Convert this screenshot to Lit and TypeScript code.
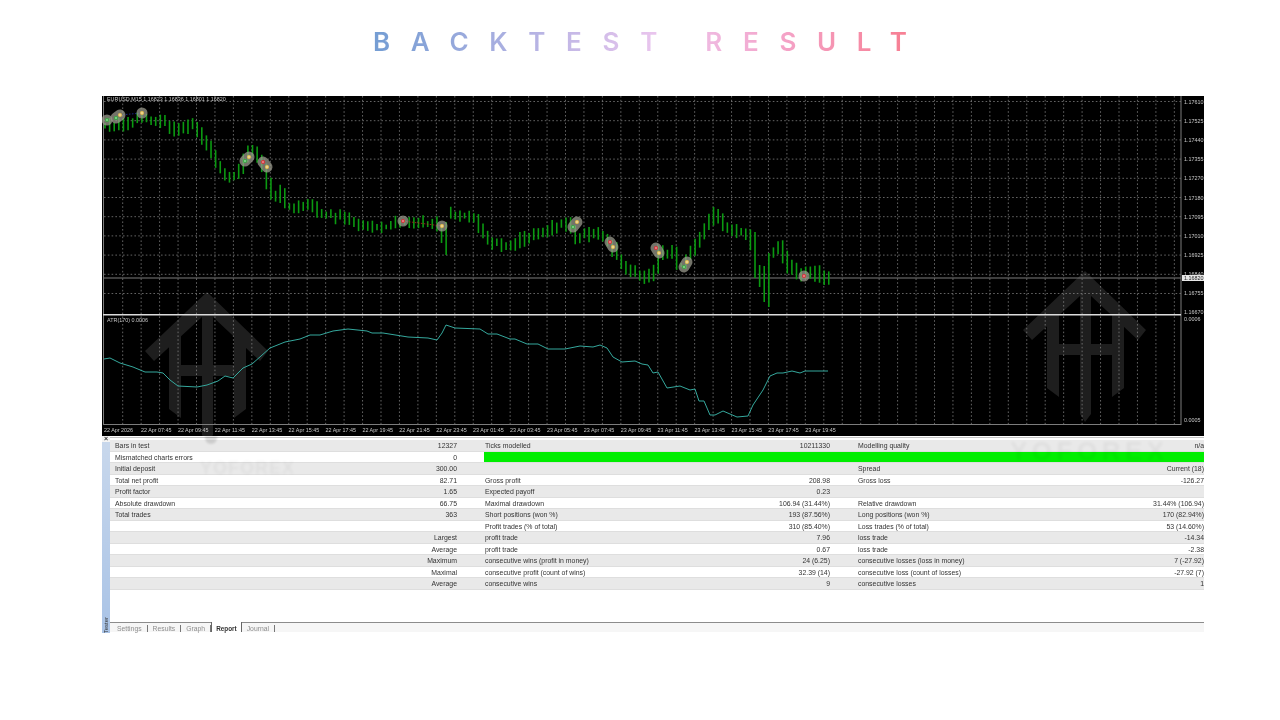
import { css, html, LitElement, svg } from 'lit'
import { customElement } from 'lit/decorators.js'

type Point = [number, number]

const PRICE: Point[] = [
  [105, 125], [120, 125], [142, 120], [150, 119], [163, 119], [178, 129], [197, 125],
  [205, 135], [215, 155], [227, 174], [240, 177], [247, 159], [255, 149], [263, 159],
  [270, 179], [273, 195], [283, 192], [290, 207], [313, 207], [327, 214], [353, 219],
  [367, 227], [393, 227], [403, 222], [440, 224], [450, 214], [477, 217], [482, 227],
  [492, 240], [510, 247], [530, 237], [547, 230], [570, 223], [580, 237], [597, 233],
  [613, 243], [627, 267], [647, 278], [657, 273], [663, 253], [677, 253], [683, 270],
  [693, 253], [703, 240], [710, 223], [720, 213], [730, 230], [750, 232], [755, 247],
  [758, 277], [768, 287], [770, 253], [783, 248], [792, 267], [805, 275], [820, 273],
  [828, 277],
]

// bars whose long wicks stand out in the chart: x -> [top, bottom]
const LONG_BARS: Record<number, Point> = {
  442: [224, 243],
  446: [222, 255],
  755: [232, 278],
  759: [265, 287],
  764: [266, 302],
  768: [253, 307],
}

const ATR: Point[] = [
  [104, 359], [110, 358], [120, 363], [133, 367], [145, 372], [157, 372], [163, 373],
  [170, 380], [178, 386], [197, 387], [207, 385], [218, 381], [225, 376], [233, 378],
  [243, 368], [252, 364], [270, 348], [285, 342], [300, 339], [310, 335], [320, 335],
  [333, 331], [348, 329], [367, 331], [372, 333], [383, 333], [408, 337], [428, 338],
  [437, 340], [442, 333], [446, 325], [455, 328], [480, 329], [488, 334], [497, 334],
  [510, 339], [515, 339], [527, 344], [538, 344], [548, 349], [565, 349], [580, 346],
  [593, 347], [600, 345], [607, 348], [613, 357], [622, 362], [635, 361], [642, 364],
  [648, 365], [653, 373], [658, 372], [667, 388], [680, 386], [690, 390], [695, 389],
  [699, 401], [704, 401], [710, 415], [715, 415], [723, 411], [737, 417], [748, 416],
  [753, 405], [763, 390], [770, 376], [777, 373], [783, 373], [792, 371], [800, 373],
  [805, 371], [828, 371],
]

const TRADES: { a: Point; b?: Point; c: string }[] = [
  { a: [107, 120], c: 'g' },
  { a: [116, 118], b: [120, 115], c: 'g' },
  { a: [142, 113], c: 'y' },
  { a: [245, 161], b: [249, 157], c: 'g' },
  { a: [263, 162], b: [267, 167], c: 'r' },
  { a: [403, 221], c: 'r' },
  { a: [442, 226], c: 'y' },
  { a: [573, 227], b: [577, 222], c: 'g' },
  { a: [610, 242], b: [613, 247], c: 'r' },
  { a: [656, 248], b: [659, 253], c: 'r' },
  { a: [684, 267], b: [687, 262], c: 'g' },
  { a: [804, 276], c: 'r' },
]

const PRICE_LABELS: [string, number][] = [
  ['1.17610', 102], ['1.17525', 121], ['1.17440', 140], ['1.17355', 159], ['1.17270', 178],
  ['1.17180', 198], ['1.17095', 217], ['1.17010', 236], ['1.16925', 255], ['1.16840', 274],
  ['1.16755', 293], ['1.16670', 312],
]

const TIME_LABELS = [
  '22 Apr 07:45', '22 Apr 09:45', '22 Apr 11:45', '22 Apr 13:45', '22 Apr 15:45',
  '22 Apr 17:45', '22 Apr 19:45', '22 Apr 21:45', '22 Apr 23:45', '23 Apr 01:45',
  '23 Apr 03:45', '23 Apr 05:45', '23 Apr 07:45', '23 Apr 09:45', '23 Apr 11:45',
  '23 Apr 13:45', '23 Apr 15:45', '23 Apr 17:45', '23 Apr 19:45',
]

const ROWS: string[][] = [
  ['Bars in test', '12327', 'Ticks modelled', '10211330', 'Modelling quality', 'n/a'],
  ['Mismatched charts errors', '0'],
  ['Initial deposit', '300.00', '', '', 'Spread', 'Current (18)'],
  ['Total net profit', '82.71', 'Gross profit', '208.98', 'Gross loss', '-126.27'],
  ['Profit factor', '1.65', 'Expected payoff', '0.23', '', ''],
  ['Absolute drawdown', '66.75', 'Maximal drawdown', '106.94 (31.44%)', 'Relative drawdown', '31.44% (106.94)'],
  ['Total trades', '363', 'Short positions (won %)', '193 (87.56%)', 'Long positions (won %)', '170 (82.94%)'],
  ['', '', 'Profit trades (% of total)', '310 (85.40%)', 'Loss trades (% of total)', '53 (14.60%)'],
  ['', 'Largest', 'profit trade', '7.96', 'loss trade', '-14.34'],
  ['', 'Average', 'profit trade', '0.67', 'loss trade', '-2.38'],
  ['', 'Maximum', 'consecutive wins (profit in money)', '24 (6.25)', 'consecutive losses (loss in money)', '7 (-27.92)'],
  ['', 'Maximal', 'consecutive profit (count of wins)', '32.39 (14)', 'consecutive loss (count of losses)', '-27.92 (7)'],
  ['', 'Average', 'consecutive wins', '9', 'consecutive losses', '1'],
]

const TABS = ['Settings', 'Results', 'Graph', 'Report', 'Journal']

function range(count: number) {
  return Array.from({ length: count }, (_, i) => i)
}

function priceAt(x: number) {
  for (let i = 1; i < PRICE.length; i++) {
    const [x0, y0] = PRICE[i - 1]
    const [x1, y1] = PRICE[i]
    if (x <= x1) return y0 + ((y1 - y0) * (x - x0)) / (x1 - x0)
  }
  return PRICE[PRICE.length - 1][1]
}

function makeBars() {
  let seed = 17
  const rand = () => {
    seed = (seed * 16807) % 2147483647
    return seed / 2147483647
  }
  return range(158).map((i) => {
    const x = 105 + i * 4.61
    const y = priceAt(x)
    const next = priceAt(x + 4.61)
    let top = Math.min(y, next) - 2 - rand() * 6
    let bottom = Math.max(y, next) + 2 + rand() * 6
    const near = Object.keys(LONG_BARS).find((k) => Math.abs(Number(k) - x) < 2.3)
    if (near) [top, bottom] = LONG_BARS[Number(near)]
    return { x, top, bottom }
  })
}

function logo(dx: number, dy: number) {
  return svg`<g class="logo" transform="translate(${dx} ${dy})">
    <path d="M1023 330 L1085 271 L1146 330 L1138 340 L1091 296 L1091 344 L1112 344 L1112 300 L1124 312 L1124 388 L1112 397 L1112 355 L1091 355 L1091 414 L1085 422 L1080 414 L1080 355 L1059 355 L1059 397 L1047 388 L1047 312 L1059 300 L1059 344 L1080 344 L1080 296 L1032 340 Z" />
  </g>`
}

function line(points: Point[]) {
  return points.map(([x, y]) => `${x},${y}`).join(' ')
}

@customElement('price-chart')
export class PriceChart extends LitElement {
  static styles = css`
    :host {
      display: block;
      height: 340px;
      background: #000;
      overflow: hidden;
    }

    svg {
      display: block;
      width: 100%;
      height: 100%;
      filter: blur(0.45px);
    }

    .logo {
      fill: #1e1e1e;
    }

    .grid {
      stroke: #8e8e8e;
      stroke-width: 0.7;
      stroke-dasharray: 1.6 2.2;
    }

    .rule {
      stroke: #7c7c7c;
      stroke-width: 1;
    }

    .split {
      stroke: #dcdcdc;
      stroke-width: 1.5;
    }

    .bar {
      stroke: #0b9a11;
      stroke-width: 1.6;
      fill: none;
    }

    .atr {
      stroke: #35a89d;
      stroke-width: 1;
      fill: none;
    }

    .link {
      stroke-width: 0.8;
      stroke-dasharray: 1.5 1.5;
    }

    .blob {
      stroke: #9a9a8c;
      stroke-opacity: 0.75;
      stroke-width: 11;
      stroke-linecap: round;
    }

    .dot-g {
      fill: #35b040;
    }

    .dot-r {
      fill: #e03038;
    }

    .dot-y {
      fill: #e8c050;
    }

    .core {
      fill: #f4f4f4;
    }

    text {
      font-family: 'Liberation Sans', Arial, sans-serif;
      font-size: 5.4px;
      fill: #c8c8c8;
    }

    .price-now {
      fill: #222;
    }

    .now-box {
      fill: #e8e8e8;
    }
  `

  private renderMarker(p: Point, c: string) {
    return svg`
      <circle class="dot-${c}" cx=${p[0]} cy=${p[1]} r="2" />
      <circle class="core" cx=${p[0]} cy=${p[1]} r="0.7" />
    `
  }

  render() {
    const o = 102
    const v = 96
    return html`
      <svg viewBox="${o} ${v} 1102 340" xmlns="http://www.w3.org/2000/svg">
        ${logo(-878, 21)} ${logo(0, 0)}
        ${range(58).map((i) => {
          const x = 122.7 + i * 18.45
          return svg`<line class="grid" x1=${x} x2=${x} y1="96" y2="425" />`
        })}
        ${range(11).map((i) => {
          const y = 101.5 + i * 19.2
          return svg`<line class="grid" x1="104" x2="1181" y1=${y} y2=${y} />`
        })}
        <line class="rule" x1="103.5" x2="103.5" y1="96" y2="425" />
        <line class="rule" x1="1181" x2="1181" y1="96" y2="425" />
        <line class="rule" x1="104" x2="1181" y1="278" y2="278" />
        <line class="split" x1="103" x2="1181" y1="314.8" y2="314.8" />
        <line class="rule" x1="103" x2="1181" y1="424.5" y2="424.5" />

        ${makeBars().map(
          (b) => svg`<path class="bar" d="M${b.x} ${b.top}V${b.bottom}" />`,
        )}
        <polyline class="atr" points=${line(ATR)} />

        <line class="link" stroke="#2030a0" x1="120" y1="115" x2="142" y2="113" />
        <line class="link" stroke="#c02020" x1="403" y1="221" x2="442" y2="226" />
        ${TRADES.map((t) => {
          const b = t.b ?? t.a
          return svg`
            <line class="blob" x1=${t.a[0]} y1=${t.a[1]} x2=${b[0]} y2=${b[1]} />
            ${this.renderMarker(t.a, t.c)}
            ${t.b ? this.renderMarker(t.b, 'y') : ''}
          `
        })}

        <text x="107" y="101">EURUSD,M15 1.16823 1.16836 1.16801 1.16820</text>
        <text x="107" y="322">ATR(170) 0.0006</text>
        ${PRICE_LABELS.map(([label, y]) => svg`<text x="1184" y=${y + 2}>${label}</text>`)}
        <rect class="now-box" x="1182" y="275" width="22" height="6" />
        <text class="price-now" x="1184" y="280">1.16820</text>
        <text x="1184" y="321">0.0006</text>
        <text x="1184" y="422">0.0005</text>
        <text x="104" y="432">22 Apr 2026</text>
        ${TIME_LABELS.map((label, i) => svg`<text x=${141 + i * 36.9} y="432">${label}</text>`)}
      </svg>
    `
  }
}

@customElement('report-table')
export class ReportTable extends LitElement {
  static styles = css`
    :host {
      position: relative;
      display: flex;
      height: 197px;
      overflow: hidden;
      background: #fff;
      font-family: 'Liberation Sans', Arial, sans-serif;
      font-size: 6.9px;
      color: #333;
    }

    .side {
      display: flex;
      flex-direction: column;
      justify-content: space-between;
      align-items: center;
      width: 8px;
      background: linear-gradient(#c9d8ec, #a9c3e6);
      color: #333;
      filter: blur(0.3px);
    }

    .close {
      width: 100%;
      background: #f4f4f4;
      font-size: 7px;
      line-height: 6px;
      text-align: center;
      font-weight: 700;
    }

    .vert {
      writing-mode: vertical-rl;
      transform: rotate(180deg);
      font-size: 6px;
      line-height: 8px;
    }

    .body {
      display: flex;
      flex: 1;
      flex-direction: column;
      min-width: 0;
      filter: blur(0.35px);
    }

    .rows {
      flex: 1;
      margin-top: 1px;
      padding-top: 2px;
      border-top: 1px solid #c4c4c4;
    }

    .row {
      display: grid;
      grid-template-columns: 370px 373px 351px;
      height: 11.52px;
      line-height: 11.5px;
      box-shadow: inset 0 -1px 0 #dedede;
      white-space: nowrap;
    }

    .row:nth-child(odd) {
      background: #e9e9e9;
    }

    .cell {
      display: flex;
      justify-content: space-between;
      padding: 0 23px 0 5px;
    }

    .cell:last-child {
      padding-right: 0;
    }

    .meter {
      grid-column: 2 / 4;
      margin: 0.6px 0 0.8px 4px;
      background: #00ee00;
    }

    .tabs {
      display: flex;
      height: 9px;
      margin-bottom: 1px;
      border-top: 1px solid #8c8c8c;
      background: #f6f6f6;
      padding-left: 2px;
      color: #8e8e8e;
      font-size: 6.8px;
    }

    .tab {
      padding: 0 5px;
      border-right: 1px solid #777;
      margin: 2px 0 0;
      line-height: 7px;
    }

    .tab.active {
      margin: -1px 0 0;
      padding: 3px 4px 0;
      background: #fff;
      color: #333;
      font-size: 6.4px;
      font-weight: 700;
      border-right: 1px solid #666;
      border-left: 1px solid #666;
    }

    .mark {
      position: absolute;
      font-weight: 700;
      color: #000;
      opacity: 0.04;
      filter: blur(1.4px);
      pointer-events: none;
    }

    .mark.left {
      left: 98px;
      top: 20px;
      font-size: 18px;
      line-height: 24px;
      letter-spacing: 1px;
    }

    .mark.right {
      left: 908px;
      top: 0;
      font-size: 26px;
      line-height: 30px;
      letter-spacing: 4.5px;
    }

    .tip {
      position: absolute;
      left: 103px;
      top: 0;
      width: 12px;
      height: 8px;
      border-radius: 0 0 6px 6px;
      background: #000;
      opacity: 0.12;
      filter: blur(1px);
    }
  `

  render() {
    return html`
      <div class="side">
        <span class="close">×</span>
        <span class="vert">Tester</span>
      </div>
      <div class="body">
        <div class="rows">
          ${ROWS.map(
            (r) => html`
              <div class="row">
                <div class="cell"><span>${r[0]}</span><span>${r[1]}</span></div>
                ${r.length === 2
                  ? html`<div class="meter"></div>`
                  : html`
                      <div class="cell"><span>${r[2]}</span><span>${r[3]}</span></div>
                      <div class="cell"><span>${r[4]}</span><span>${r[5]}</span></div>
                    `}
              </div>
            `,
          )}
        </div>
        <div class="tabs">
          ${TABS.map(
            (t) => html`<div class="tab ${t === 'Report' ? 'active' : ''}">${t}</div>`,
          )}
        </div>
      </div>
      <div class="tip"></div>
      <div class="mark left">YOFOREX</div>
      <div class="mark right">YOFOREX</div>
    `
  }
}

@customElement('app-root')
export class AppRoot extends LitElement {
  static styles = css`
    :host {
      display: block;
      height: 720px;
      background: #fff;
      overflow: hidden;
    }

    .title {
      height: 96px;
      padding-top: 24px;
      box-sizing: border-box;
      text-align: center;
      font-family: Inter, 'Open Sans', Arial, sans-serif;
      font-size: 26px;
      font-weight: 600;
      line-height: 36px;
    }

    .title span {
      display: inline-block;
      margin-right: -20.7px;
      letter-spacing: 20.7px;
      white-space: pre;
      background: linear-gradient(90deg, #749dd3, #b8b4e4 30%, #ecc6ee 52%, #f4a6cc 72%, #f77f93 96%);
      -webkit-background-clip: text;
      background-clip: text;
      color: transparent;
    }

    .panel {
      width: 1102px;
      margin-left: 102px;
    }
  `

  render() {
    return html`
      <div class="title"><span>BACKTEST RESULT</span></div>
      <div class="panel">
        <price-chart></price-chart>
        <report-table></report-table>
      </div>
    `
  }
}
